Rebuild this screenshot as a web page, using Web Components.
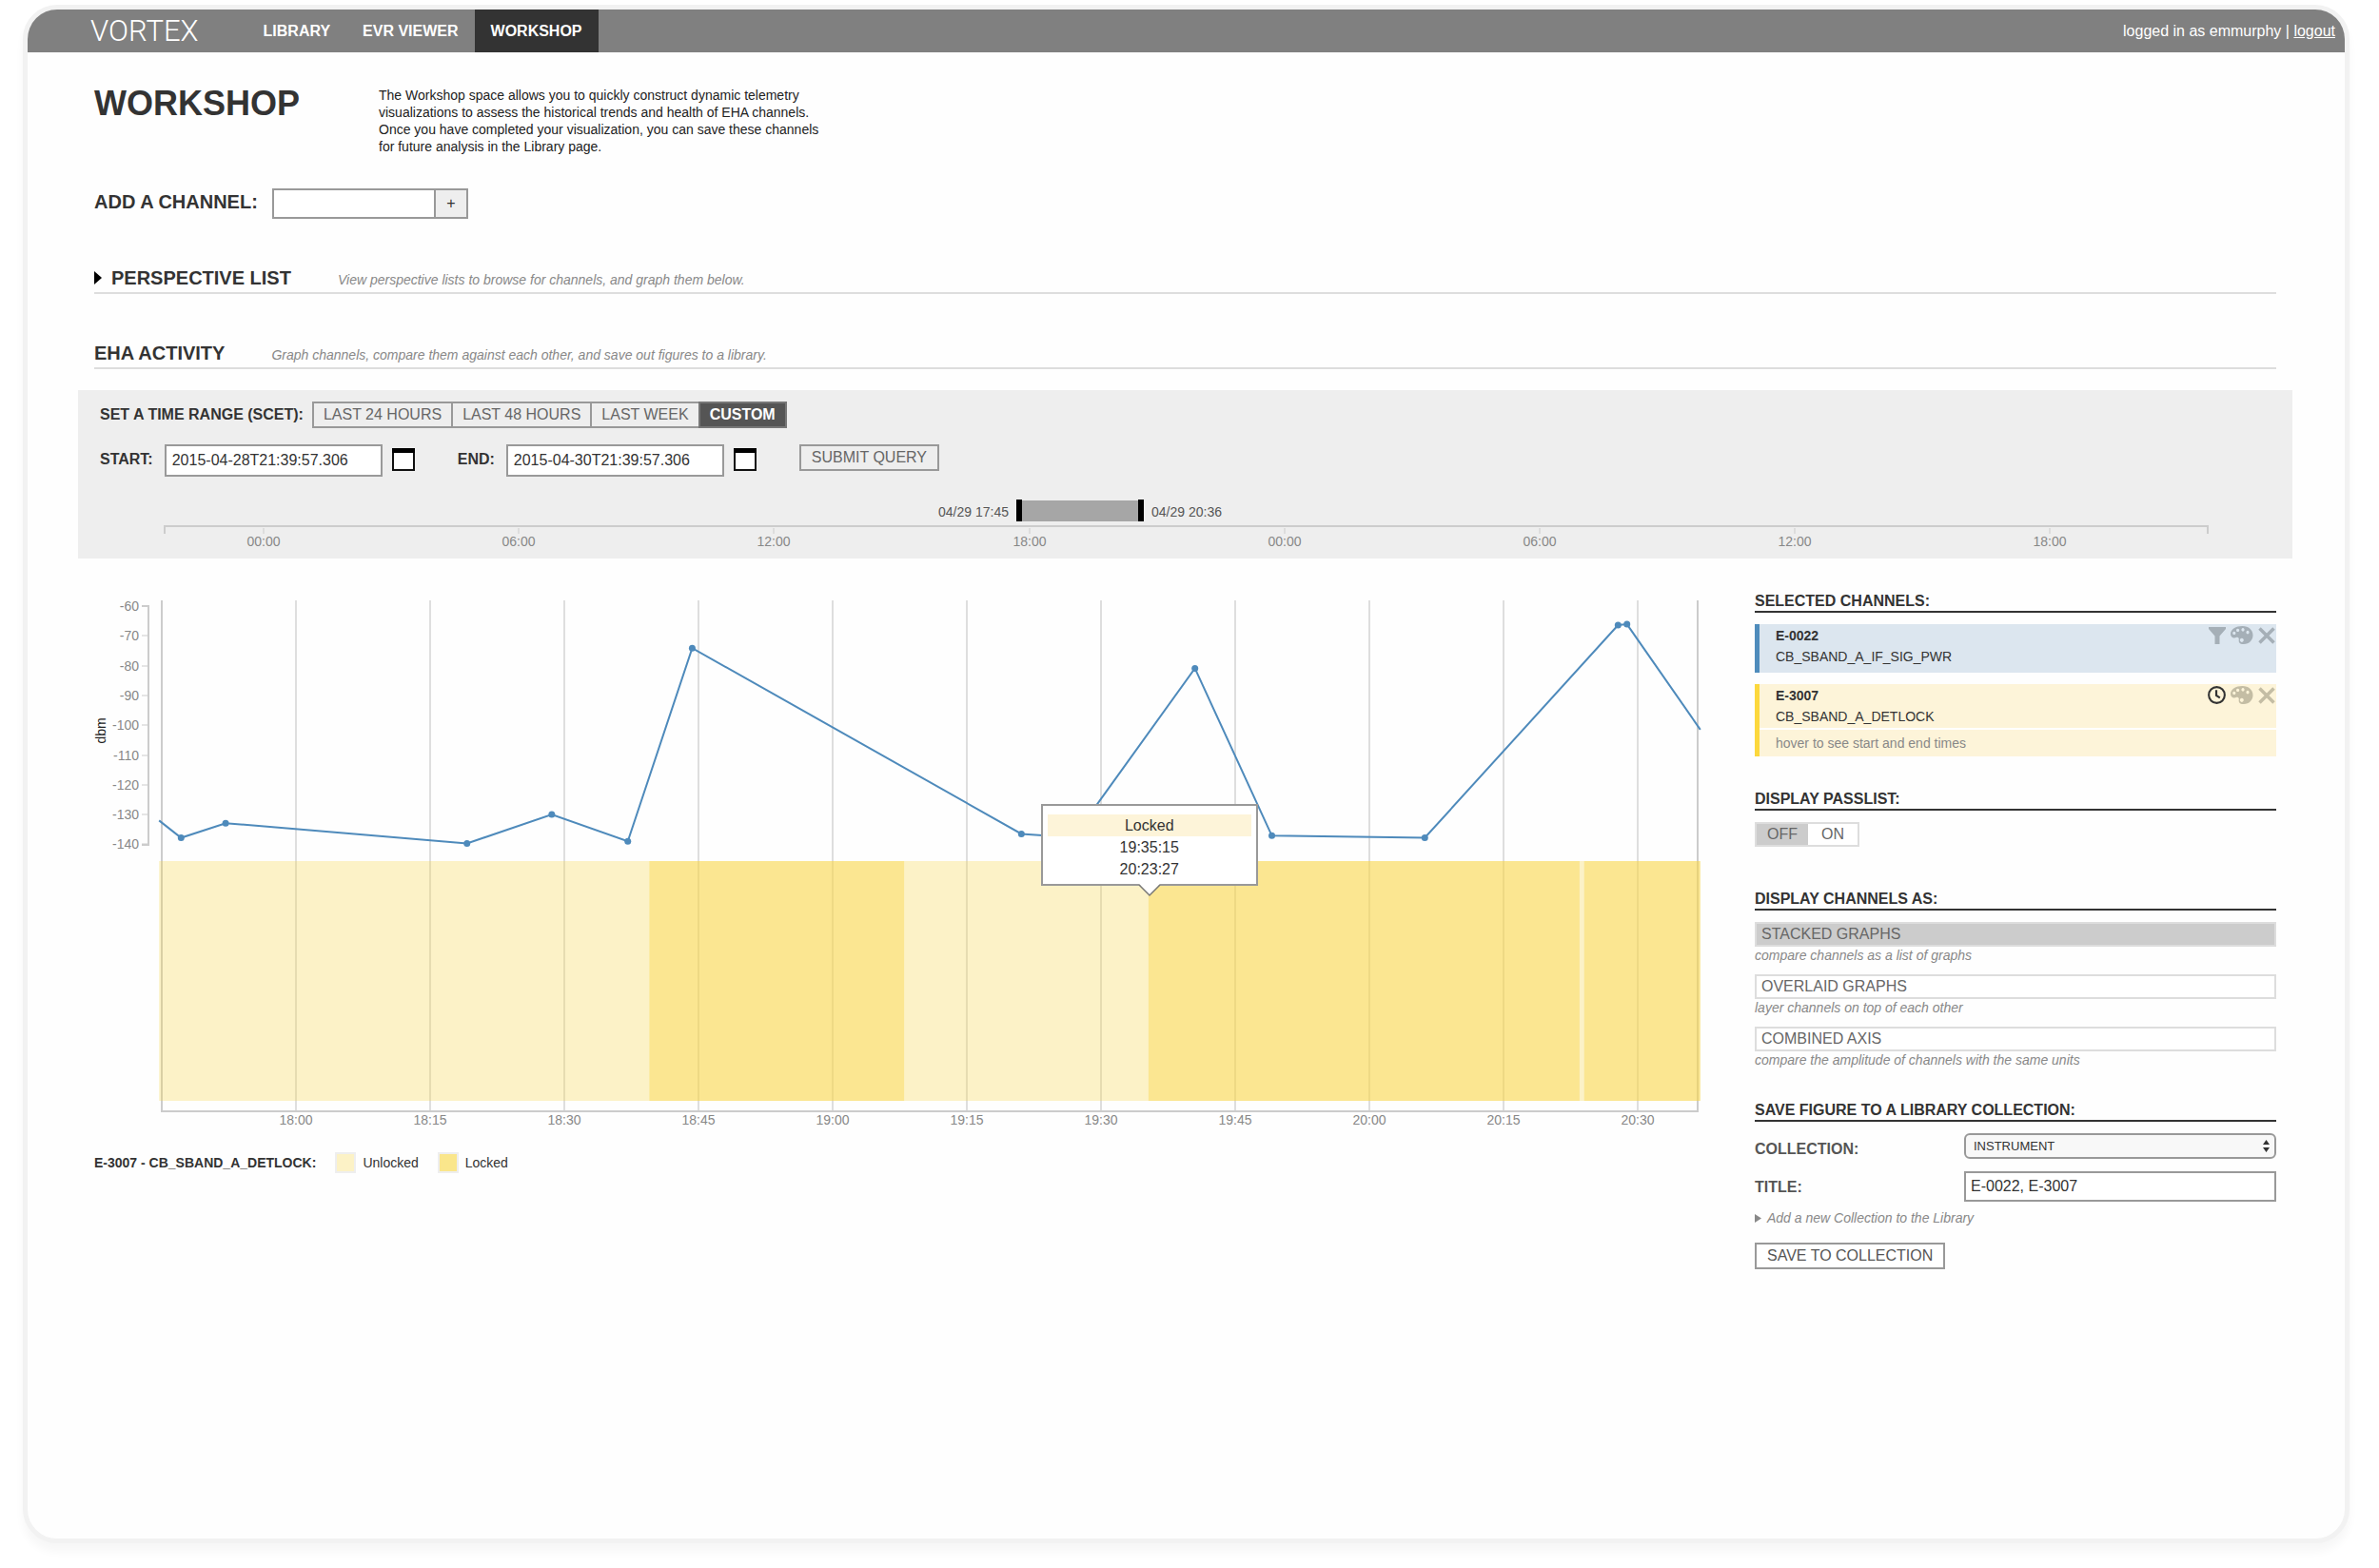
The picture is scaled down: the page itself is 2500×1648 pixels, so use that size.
<!DOCTYPE html>
<html lang="en">
<head>
<meta charset="utf-8">
<title>Vortex – Workshop</title>
<style>
html, body { margin: 0; background: #fff; }
body { font-family: "Liberation Sans", Arial, Helvetica, sans-serif; font-size: 14px; color: #333; overflow-x: hidden; }
</style>
</head>
<body>
<vx-shell>
  <vx-nav slot="nav" user="emmurphy"></vx-nav>
  <vx-intro heading="WORKSHOP">The Workshop space allows you to quickly construct dynamic telemetry visualizations to assess the historical trends and health of EHA channels. Once you have completed your visualization, you can save these channels for future analysis in the Library page.</vx-intro>
  <vx-add-channel></vx-add-channel>
  <vx-section-head heading="PERSPECTIVE LIST" collapsed>View perspective lists to browse for channels, and graph them below.</vx-section-head>
  <vx-section-head heading="EHA ACTIVITY">Graph channels, compare them against each other, and save out figures to a library.</vx-section-head>
  <vx-time-range><vx-timeline></vx-timeline></vx-time-range>
  <vx-columns>
    <vx-chart></vx-chart>
    <vx-legend heading="E-3007 - CB_SBAND_A_DETLOCK:"></vx-legend>
    <vx-panel slot="side" heading="SELECTED CHANNELS:">
      <vx-channel tone="blue" code="E-0022" name="CB_SBAND_A_IF_SIG_PWR" icon="filter"></vx-channel>
      <vx-channel tone="yellow" code="E-3007" name="CB_SBAND_A_DETLOCK" icon="clock"><span slot="note">hover to see start and end times</span></vx-channel>
    </vx-panel>
    <vx-panel slot="side" heading="DISPLAY PASSLIST:"><vx-switch></vx-switch></vx-panel>
    <vx-panel slot="side" heading="DISPLAY CHANNELS AS:">
      <vx-option label="STACKED GRAPHS" selected>compare channels as a list of graphs</vx-option>
      <vx-option label="OVERLAID GRAPHS">layer channels on top of each other</vx-option>
      <vx-option label="COMBINED AXIS">compare the amplitude of channels with the same units</vx-option>
    </vx-panel>
    <vx-panel slot="side" heading="SAVE FIGURE TO A LIBRARY COLLECTION:"><vx-save-form></vx-save-form></vx-panel>
  </vx-columns>
</vx-shell>

<script>
const BASE = `
  :host { display: block; }
  *, *::before, *::after { box-sizing: border-box; }
  button, input, select { font: inherit; color: inherit; margin: 0; border-radius: 0; outline: 0; }
  button { cursor: pointer; }
  h1, h2, h3, p { margin: 0; }
`;

function define(name, css, html, ready) {
  customElements.define(name, class extends HTMLElement {
    constructor() {
      super();
      this.attachShadow({ mode: 'open' });
    }
    connectedCallback() {
      if (this.shadowRoot.childNodes.length) return;
      const body = typeof html === 'function' ? html(this) : html;
      this.shadowRoot.innerHTML = `<style>${BASE}${css}</style>${body}`;
      if (ready) ready(this.shadowRoot);
    }
  });
}

define('vx-shell', `
  :host { margin: 5px 31px 26px 24px; min-height: calc(100vh - 31px); box-sizing: border-box;
    border: 5px solid #f2f2f2; border-radius: 36px; overflow: hidden; background: #fefefe;
    box-shadow: 0 9px 10px rgba(0,0,0,.035); }
  main { padding: 36px 72px 40px 70px; }
`, `<slot name="nav"></slot><main><slot></slot></main>`);

define('vx-nav', `
  header { display: flex; align-items: center; height: 45px; padding: 0 10px 0 66px; background: #808080; color: #fff; font-size: 16px; }
  .brand { font-family: Roboto, "Liberation Sans", sans-serif; font-weight: 300; font-size: 31px; line-height: 45px; margin-right: 51px; }
  nav { display: flex; flex: 1; }
  nav a { padding: 0 17px; line-height: 45px; font-weight: bold; color: #fff; text-decoration: none; }
  nav a[aria-current] { background: #333; }
  .user a { color: #fff; }
`, el => `<header>
  <div class="brand">VORTEX</div>
  <nav><a href="#library">LIBRARY</a><a href="#evr">EVR VIEWER</a><a href="#workshop" aria-current="page">WORKSHOP</a></nav>
  <div class="user">logged in as ${el.getAttribute('user')} | <a href="#logout">logout</a></div>
</header>`);

define('vx-intro', `
  :host { display: flex; align-items: flex-start; }
  h1 { flex: 0 0 299px; font-size: 36px; line-height: 36px; }
  p { max-width: 472px; line-height: 18px; color: #222; }
`, el => `<h1>${el.getAttribute('heading')}</h1><p><slot></slot></p>`);

define('vx-add-channel', `
  :host { display: flex; align-items: flex-start; gap: 15px; margin-top: 35px; }
  label { font-size: 20px; line-height: 28px; font-weight: bold; }
  form { display: flex; }
  input { width: 172px; height: 32px; padding: 0 8px; border: 2px solid #999; background: #fff; font-size: 16px; }
  button { width: 36px; height: 32px; margin-left: -2px; padding: 0; border: 2px solid #999; background: #eee; font-size: 16px; }
`, `<label for="channel">ADD A CHANNEL:</label>
<form><input id="channel" type="text"><button type="button">+</button></form>`);

define('vx-section-head', `
  :host { display: flex; align-items: baseline; gap: 49px; margin-top: 50px; padding-bottom: 3px; border-bottom: 2px solid #ddd; }
  h2 { display: flex; align-items: center; gap: 10px; font-size: 20px; line-height: 24px; }
  svg { display: block; }
  p { font-style: italic; color: #888; }
`, el => `<h2>${el.hasAttribute('collapsed') ? '<svg width="8" height="14" viewBox="0 0 8 14"><path d="M0 0L8 7L0 14Z" fill="#000"/></svg>' : ''}<span>${el.getAttribute('heading')}</span></h2><p><slot></slot></p>`);

const CAL = `<svg width="24" height="24" viewBox="0 0 24 24"><rect x="1" y="1" width="22" height="22" fill="#fff" stroke="#111" stroke-width="2"/><rect width="24" height="5" fill="#000"/></svg>`;

define('vx-time-range', `
  :host { margin: 22px -17px 0; padding-top: 12px; background: #eee; font-size: 16px; }
  .row { display: flex; align-items: flex-start; padding: 0 23px; }
  .row + .row { margin-top: 17px; }
  .title, label { font-weight: bold; line-height: 28px; }
  .group { display: flex; margin-left: 9px; }
  button { height: 28px; padding: 0 11px; border: 2px solid #999; background: #eee; color: #666; line-height: 24px; }
  .group button { padding: 0 10px; }
  .group button + button { margin-left: -2px; }
  .group button[aria-pressed=true] { background: #555; border-color: #777; color: #fff; font-weight: bold; }
  input { width: 229px; height: 34px; margin: 0 10px 0 12px; padding: 0 6px; border: 2px solid #999; background: #fff; }
  label { line-height: 31px; }
  .cal { height: 24px; margin: 4px 45px 0 0; padding: 0; border: 0; background: none; }
  svg { display: block; }
`, `<div class="row"><span class="title">SET A TIME RANGE (SCET):</span>
  <div class="group"><button type="button">LAST 24 HOURS</button><button type="button">LAST 48 HOURS</button><button type="button">LAST WEEK</button><button type="button" aria-pressed="true">CUSTOM</button></div></div>
<div class="row">
  <label for="start">START:</label><input id="start" type="text" value="2015-04-28T21:39:57.306"><button type="button" class="cal" aria-label="Pick start">${CAL}</button>
  <label for="end">END:</label><input id="end" type="text" value="2015-04-30T21:39:57.306"><button type="button" class="cal" aria-label="Pick end">${CAL}</button>
  <button type="button">SUBMIT QUERY</button></div>
<slot></slot>`);

define('vx-timeline', `
  svg { display: block; width: 100%; height: auto; }
  text { font-size: 14px; }
`, () => {
  let ticks = '';
  ['00:00', '06:00', '12:00', '18:00', '00:00', '06:00', '12:00', '18:00'].forEach((t, i) => {
    const px = 195 + Math.round(i * 268.2);
    ticks += `<path d="M${px} 54V60" stroke="#ccc" stroke-width="1"/><text x="${px}" y="73" text-anchor="middle" fill="#888">${t}</text>`;
  });
  return `<svg viewBox="0 0 2327 86">
    <path d="M91 60V52H2238V60" fill="none" stroke="#ccc" stroke-width="2"/>${ticks}
    <rect x="989" y="25" width="127" height="22" fill="#a6a6a6"/>
    <rect x="986" y="24" width="6" height="23" fill="#000"/><rect x="1114" y="24" width="6" height="23" fill="#000"/>
    <text x="978" y="42" text-anchor="end" fill="#555">04/29 17:45</text>
    <text x="1128" y="42" fill="#555">04/29 20:36</text>
  </svg>`;
});

define('vx-columns', `
  :host { display: grid; grid-template-columns: minmax(0, 1fr) 548px; column-gap: 52px; margin-top: 35px; align-items: start; }
  aside { display: flex; flex-direction: column; gap: 35px; }
`, `<div><slot></slot></div><aside><slot name="side"></slot></aside>`);

define('vx-chart', `
  :host { position: relative; }
  svg { display: block; width: 100%; height: auto; overflow: visible; }
  svg text { font-size: 14px; fill: #888; }
  .tip { position: absolute; transform: translate(-50%, -100%); width: 228px; padding: 9px 5px 0; height: 86px;
    background: #fff; border: 2px solid #999; text-align: center; font-size: 16px; line-height: 23px; }
  .tip b { display: block; font-weight: normal; background: #fdf4d9; }
  .tip span { display: block; }
  .tip svg { position: absolute; left: 101px; top: 82px; width: 22px; height: 13px; }
`, () => {
  const W = 1693, H = 570;
  const X = m => 212 + m * 9.4;
  const Y = v => 15 + (-60 - v) * 3.13;
  const bands = [[-15.3, 39.5, 0], [39.5, 68, 1], [68, 95.3, 0], [95.3, 143.5, 1], [143.5, 144, 0], [144, 157, 1]];
  const data = [[-15.3, -132], [-12.84, -137.8], [-7.86, -132.9], [19.12, -139.7], [28.6, -130], [37.1, -139], [44.3, -74.1],
    [81.1, -136.5], [86.9, -137.7], [100.5, -80.9], [109.1, -137.1], [126.2, -137.8], [147.8, -66.4], [148.8, -66.1], [157, -101.5]];
  let s = '';
  for (let m = 0; m <= 150; m += 15) {
    const px = Math.round(X(m));
    const hh = 18 + Math.floor(m / 60), mm = String(m % 60).padStart(2, '0');
    s += `<path d="M${px} 9V546" stroke="#dedede" stroke-width="2"/><text x="${px}" y="560" text-anchor="middle">${hh}:${mm}</text>`;
  }
  s += `<path d="M71 9V546H1685V9" fill="none" stroke="#ccc" stroke-width="2"/>`;
  s += `<path d="M50 15H57V266H50" fill="none" stroke="#ccc" stroke-width="2"/>`;
  for (let v = -60; v >= -140; v -= 10) {
    const py = Math.round(Y(v));
    s += `<path d="M50 ${py}H57" stroke="#ccc"/><text x="47" y="${py + 5}" text-anchor="end">${v}</text>`;
  }
  s += `<text transform="translate(12 146) rotate(-90)" text-anchor="middle" style="fill:#222">dbm</text>`;
  for (const [a, b, on] of bands)
    s += `<rect x="${X(a)}" y="283" width="${X(b) - X(a)}" height="252" fill="#f9d648" fill-opacity="${on ? .6 : .3}"/>`;
  s += `<polyline fill="none" stroke="#4e8abb" stroke-width="2" points="${data.map(d => X(d[0]) + ',' + Y(d[1])).join(' ')}"/>`;
  for (const d of data.slice(1, -1)) s += `<circle cx="${X(d[0])}" cy="${Y(d[1])}" r="3.5" fill="#4e8abb"/>`;
  return `<svg viewBox="0 0 ${W} ${H}">${s}</svg>
  <div class="tip" style="left:${X(95.4) / W * 100}%;top:${309 / H * 100}%"><b>Locked</b><span>19:35:15</span><span>20:23:27</span>
    <svg viewBox="0 0 22 13"><path d="M0 0H22L11 12Z" fill="#fff"/><path d="M0 1L11 12L22 1" fill="none" stroke="#777" stroke-width="1.5"/></svg></div>`;
});

define('vx-legend', `
  :host { display: flex; align-items: center; gap: 20px; margin-top: 19px; }
  span { display: flex; align-items: center; gap: 7px; }
  i { width: 22px; height: 22px; border: 2px solid #eee; background: #fcf2c6; }
  i.on { background: #fae68b; }
`, el => `<b>${el.getAttribute('heading')}</b><span><i></i>Unlocked</span><span><i class="on"></i>Locked</span>`);

define('vx-panel', `
  h3 { font-size: 16px; line-height: 20px; border-bottom: 2px solid #333; margin-bottom: 12px; }
  .body { display: flex; flex-direction: column; gap: 12px; }
`, el => `<h3>${el.getAttribute('heading')}</h3><div class="body"><slot></slot></div>`);

const ICONS = {
  filter: '<svg width="18" height="18" viewBox="0 0 18 18"><path d="M0 0H18V2L11.500 9.500V18H6.500V9.500L0 2Z"/></svg>',
  clock: '<svg width="19" height="19" viewBox="0 0 20 20"><circle cx="10" cy="10" r="8.800" fill="none" stroke="currentColor" stroke-width="2.200"/><path d="M9.500 4.500V10.500L13.500 13" fill="none" stroke="currentColor" stroke-width="2.300"/></svg>',
  palette: '<svg width="24" height="19" viewBox="0 0 24 18" preserveAspectRatio="none"><path fill-rule="evenodd" d="M12.500 0C19 0 23.500 4 23.500 9C23.500 14 19.500 18 14 18C11 18 9 17.300 8.700 15.300C8.500 13.600 9.500 12 7.800 11.300C6.500 10.800 5.500 12 3.500 11.800C1.200 11.500 0 10 0 7.800C0 3.200 5.500 0 12.500 0ZM3.800 5.400a1.600 1.600 0 1 0 .01 0ZM7.600 2.500a1.600 1.600 0 1 0 .01 0ZM13 2a1.600 1.600 0 1 0 .01 0ZM18 4.600a1.600 1.600 0 1 0 .01 0ZM11.800 12a2 2 0 1 0 .01 0Z"/></svg>',
  close: '<svg width="18" height="18" viewBox="0 0 18 18"><path d="M1.500 1.500L16.500 16.500M16.500 1.500L1.500 16.500" stroke="currentColor" stroke-width="3.500"/></svg>'
};

define('vx-channel', `
  :host { --edge: #4f8cbc; --fill: #dce6ef; --ink: #a5afb7; min-height: 51px; border-left: 5px solid var(--edge); background: var(--fill); }
  :host([tone=yellow]) { --edge: #fcd83d; --fill: #fdf4d9; --ink: #c4bda4; }
  .top { display: flex; justify-content: space-between; align-items: flex-start; padding: 1px 1px 1px 17px; line-height: 22px; }
  b, .top span { display: block; }
  .icons { display: flex; align-items: center; gap: 5px; height: 21px; color: var(--ink); }
  .icons button { display: block; padding: 0; border: 0; background: none; color: inherit; }
  .icons button.active { color: #333; }
  svg { display: block; fill: currentColor; }
  ::slotted(span) { display: block; padding-left: 17px; border-top: 2px solid #fff; color: #888; line-height: 28px; }
`, el => `<div class="top"><div><b>${el.getAttribute('code')}</b><span>${el.getAttribute('name')}</span></div>
  <div class="icons"><button type="button" class="${el.getAttribute('icon') === 'clock' ? 'active' : ''}" aria-label="${el.getAttribute('icon')}">${ICONS[el.getAttribute('icon')]}</button><button type="button" aria-label="colour">${ICONS.palette}</button><button type="button" aria-label="remove">${ICONS.close}</button></div></div><slot name="note"></slot>`);

define('vx-switch', `
  :host { display: flex; padding-bottom: 10px; }
  div { display: flex; border: 2px solid #ddd; }
  button { height: 22px; padding: 0 11px; border: 0; background: #fff; color: #666; font-size: 16px; line-height: 22px; }
  button[aria-pressed=true] { background: #ccc; }
  button + button { padding: 0 14px; }
`, `<div><button type="button" aria-pressed="true">OFF</button><button type="button">ON</button></div>`);

define('vx-option', `
  :host { margin-bottom: -1px; }
  button { display: block; width: 100%; height: 26px; padding: 0 5px; border: 2px solid #ddd; background: #fff; color: #666; font-size: 16px; line-height: 22px; text-align: left; }
  :host([selected]) button { background: #ccc; }
  p { font-style: italic; color: #888; line-height: 18px; }
`, el => `<button type="button">${el.getAttribute('label')}</button><p><slot></slot></p>`);

define('vx-save-form', `
  form { display: grid; grid-template-columns: 220px 1fr; row-gap: 6px; align-items: start; }
  label { font-size: 16px; font-weight: bold; line-height: 34px; color: #555; }
  .select { position: relative; display: block; }
  select { display: block; appearance: none; width: 100%; height: 27px; padding: 0 8px; border: 2px solid #999; border-radius: 6px; background: #f8f8f8; font-size: 13px; }
  .select svg { position: absolute; right: 7px; top: 7px; pointer-events: none; }
  input { display: block; width: 100%; height: 32px; padding: 0 5px; border: 2px solid #999; background: #fff; font-size: 16px; }
  .wide { grid-column: 1 / -1; }
  .more { display: flex; align-items: center; gap: 6px; color: #888; font-style: italic; line-height: 18px; text-decoration: none; }
  button { justify-self: start; height: 28px; margin-top: 11px; padding: 0 11px; border: 2px solid #999; background: #fff; color: #555; font-size: 16px; line-height: 24px; }
`, `<form>
  <label for="collection">COLLECTION:</label>
  <span class="select"><select id="collection"><option>INSTRUMENT</option></select><svg width="7" height="13" viewBox="0 0 7 13"><path d="M0 5L3.500 0L7 5ZM0 8L3.500 13L7 8Z" fill="#333"/></svg></span>
  <label for="title">TITLE:</label><input id="title" type="text" value="E-0022, E-3007">
  <a class="more wide" href="#new"><svg width="7" height="9" viewBox="0 0 7 9"><path d="M0 0L7 4.500L0 9Z" fill="#888"/></svg>Add a new Collection to the Library</a>
  <button class="wide" type="button">SAVE TO COLLECTION</button>
</form>`);
</script>
</body>
</html>
